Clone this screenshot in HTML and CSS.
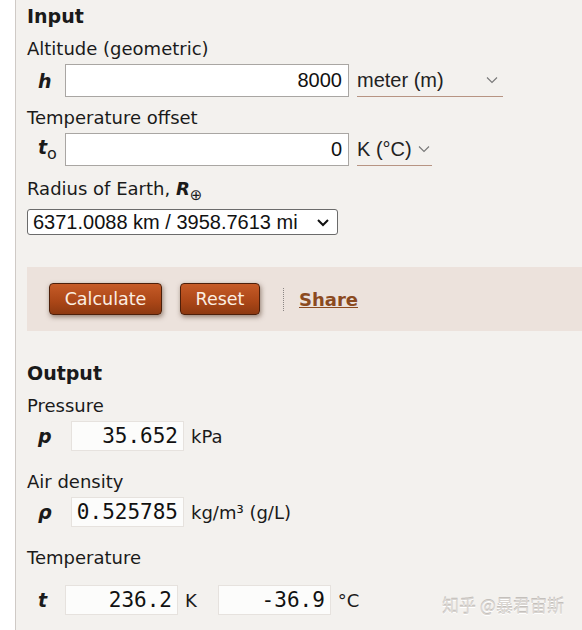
FILE: index.html
```html
<!DOCTYPE html>
<html lang="en">
<head>
  <meta charset="UTF-8">
  <meta name="viewport" content="width=device-width, initial-scale=1.0">
  <title>Air pressure at altitude</title>
  <link rel="stylesheet" href="styles.css">
</head>
<body>
  <div class="calc">
    <h2>Input</h2>
    <div class="field-label">Altitude (geometric)</div>
    <div class="row">
      <span class="var">h</span>
      <input type="text" class="num" value="8000">
      <select class="unit unit-wide">
        <option>meter (m)</option>
        <option>foot (ft)</option>
      </select>
    </div>

    <div class="field-label">Temperature offset</div>
    <div class="row">
      <span class="var">t<sub>o</sub></span>
      <input type="text" class="num" value="0">
      <select class="unit unit-short">
        <option>K (°C)</option>
        <option>°F</option>
      </select>
    </div>

    <div class="field-label radius-label">Radius of Earth, <b><i>R</i></b><sub class="earth">⊕</sub></div>
    <select class="radius">
      <option>6371.0088 km / 3958.7613 mi</option>
    </select>

    <div class="actions">
      <button class="btn btn-calc">Calculate</button>
      <button class="btn btn-reset">Reset</button>
      <span class="sep"></span>
      <a href="#" class="share">Share</a>
    </div>

    <h2 class="out-title">Output</h2>
    <div class="field-label">Pressure</div>
    <div class="row out-row">
      <span class="var var-out">p</span>
      <output class="result">35.652</output>
      <span class="unit-text">kPa</span>
    </div>

    <div class="field-label gap-top">Air density</div>
    <div class="row out-row">
      <span class="var var-out">ρ</span>
      <output class="result">0.525785</output>
      <span class="unit-text">kg/m³ (g/L)</span>
    </div>

    <div class="field-label gap-top">Temperature</div>
    <div class="row out-row temp-row">
      <span class="var">t</span>
      <output class="result">236.2</output>
      <span class="unit-text">K</span>
      <output class="result result-c">-36.9</output>
      <span class="unit-text">°C</span>
    </div>

    <div class="watermark">知乎 @暴君宙斯</div>
  </div>
</body>
</html>
```

FILE: styles.css
```css
body {
  margin: 0;
  background-color: #fff;
  font-family: "DejaVu Sans", Verdana, sans-serif;
  color: #1a1a1a;
}
.calc {
  position: relative;
  margin-left: 15px;
  border-left: 1px solid #cfcac6;
  background-color: #f3f1ee;
  padding: 4px 0 20px 11px;
  min-height: 606px;
}
h2 {
  margin: 0;
  font-size: 19px;
  line-height: 24px;
  font-weight: bold;
}
.field-label {
  font-size: 18px;
  line-height: 22px;
  margin-top: 10px;
}
.row {
  display: flex;
  align-items: center;
  margin-top: 4px;
}
.var {
  width: 38px;
  box-sizing: border-box;
  padding-left: 11px;
  font-weight: bold;
  font-style: italic;
  font-size: 19px;
}
.var sub {
  font-style: normal;
  font-weight: normal;
  font-size: 16px;
}
.num {
  width: 284px;
  height: 33px;
  box-sizing: border-box;
  border: 1px solid #a9a6a3;
  background: #fff;
  text-align: right;
  font-family: "Liberation Sans", Arial, sans-serif;
  font-size: 20px;
  padding: 0 6px;
  color: #111;
}
.unit {
  appearance: none;
  margin-left: 8px;
  height: 33px;
  border: none;
  border-bottom: 1px solid #b79483;
  background: transparent url("data:image/svg+xml;utf8,<svg xmlns='http://www.w3.org/2000/svg' width='12' height='8'><path d='M1 1.5 6 6.5 11 1.5' fill='none' stroke='%23777' stroke-width='1.1'/></svg>") no-repeat right 5px center;
  font-family: "Liberation Sans", Arial, sans-serif;
  font-size: 20px;
  color: #222;
  padding: 0;
}
.unit-wide { width: 146px; }
.unit-short { width: 75px; background-position: right 2px center; }
.radius-label {
  margin-top: 12px;
}
.earth {
  font-size: 15px;
  line-height: 0;
}
.radius {
  appearance: none;
  display: block;
  margin-top: 9px;
  width: 311px;
  height: 26px;
  border: 1px solid #6b6b6b;
  border-radius: 3px;
  background: #fff url("data:image/svg+xml;utf8,<svg xmlns='http://www.w3.org/2000/svg' width='14' height='9'><path d='M2 2 7 7 12 2' fill='none' stroke='%23111' stroke-width='2'/></svg>") no-repeat right 7px center;
  font-family: "Liberation Sans", Arial, sans-serif;
  font-size: 20px;
  color: #111;
  padding: 0 0 0 5px;
}
.actions {
  display: flex;
  align-items: center;
  margin-top: 32px;
  height: 64px;
  padding-left: 22px;
  background-color: #ece2dc;
}
.btn {
  height: 32px;
  border: 1px solid #4d1f0a;
  border-radius: 4px;
  background: linear-gradient(#c65b27, #aa4617 60%, #8d3911);
  color: #fbeee2;
  font-family: "DejaVu Sans", Verdana, sans-serif;
  font-size: 17.5px;
  padding: 0;
  box-shadow: 1px 2px 5px rgba(60, 30, 10, 0.5);
  cursor: pointer;
}
.btn-calc { width: 113px; }
.btn-reset { width: 80px; margin-left: 18px; }
.sep {
  width: 0;
  height: 23px;
  margin-left: 23px;
  border-left: 1px dotted #8a8583;
}
.share {
  margin-left: 15px;
  color: #8b4a1f;
  font-weight: bold;
  font-size: 18px;
}
.out-title {
  margin-top: 30px;
}
.field-label.gap-top {
  margin-top: 20px;
}
.out-row {
  margin-top: 4px;
}
.var-out {
  width: 44px;
}
.result {
  display: inline-block;
  width: 113px;
  height: 30px;
  box-sizing: border-box;
  border: 1px solid #e6e2de;
  background: #fcfcfb;
  text-align: right;
  font-family: "DejaVu Sans Mono", Consolas, monospace;
  font-size: 21px;
  line-height: 28px;
  padding-right: 5px;
  color: #111;
}
.unit-text {
  margin-left: 7px;
  font-size: 18px;
}
.temp-row {
  margin-top: 16px;
}
.result-c {
  margin-left: 21px;
}
.watermark {
  position: absolute;
  left: 426px;
  top: 592px;
  font-family: "Noto Sans CJK SC", sans-serif;
  font-size: 17px;
  color: #d8d4d0;
  text-shadow: 0 1px 0 #fff, 0 -1px 0 #c4c0bc;
}
```
